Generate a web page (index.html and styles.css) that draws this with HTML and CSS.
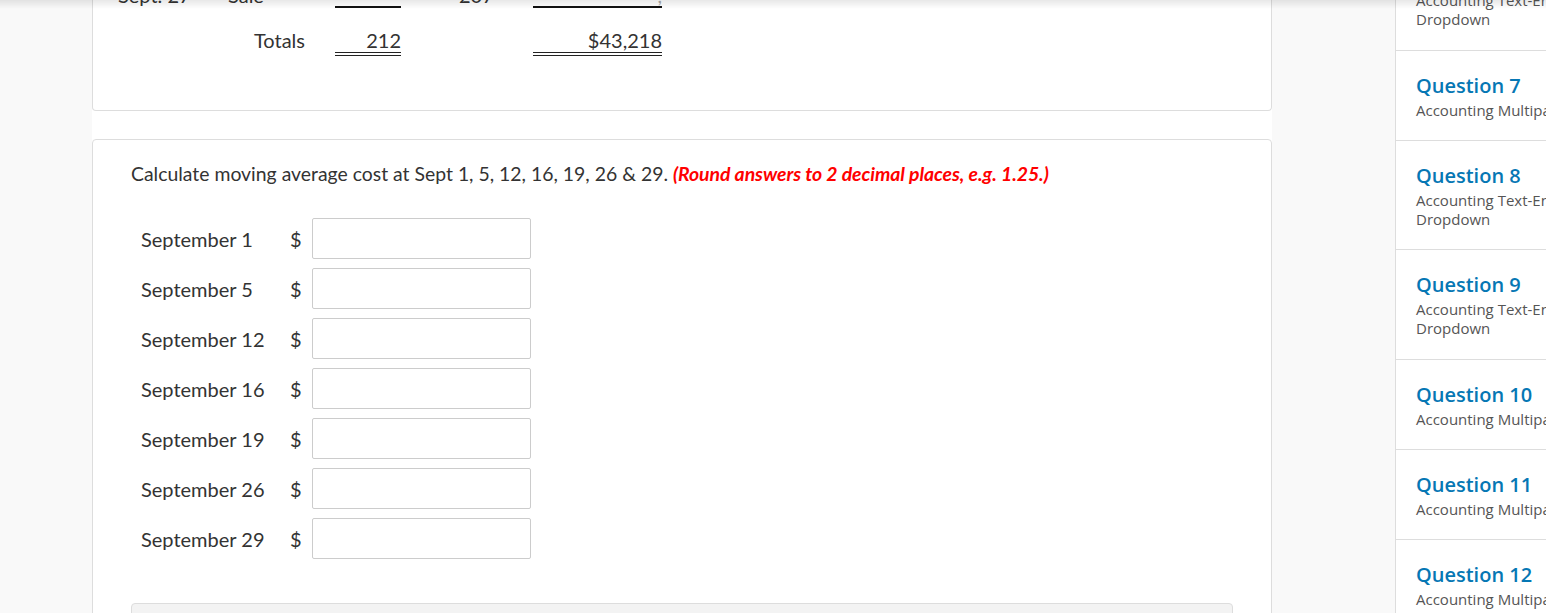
FILE: index.html
```html
<!DOCTYPE html>
<html lang="en">
<head>
<meta charset="utf-8">
<title>Quiz</title>
<link rel="stylesheet" href="styles.css">
</head>
<body>
<div class="topshade"></div>
<div class="page">
  <main class="main">
    <section class="card card-top">
      <div class="ledger">
        <div class="row row-partial">
          <div class="c1">Sept. 27</div>
          <div class="c2 left">Sale</div>
          <div class="c3 single"><span class="faint">&nbsp;</span></div>
          <div class="c4">207</div>
          <div class="c5 single"><span class="faint">,</span></div>
        </div>
        <div class="row row-total">
          <div class="c1"></div>
          <div class="c2">Totals</div>
          <div class="c3 double">212</div>
          <div class="c4"></div>
          <div class="c5 double">$43,218</div>
        </div>
      </div>
    </section>

    <section class="card card-q">
      <p class="prompt">Calculate moving average cost at Sept 1, 5, 12, 16, 19, 26 &amp; 29. <em class="hint">(Round answers to 2 decimal places, e.g. 1.25.)</em></p>
      <div class="answers">
        <div class="arow"><span class="alabel">September 1</span><span class="dollar">$</span><input class="ainput" type="text"></div>
        <div class="arow"><span class="alabel">September 5</span><span class="dollar">$</span><input class="ainput" type="text"></div>
        <div class="arow"><span class="alabel">September 12</span><span class="dollar">$</span><input class="ainput" type="text"></div>
        <div class="arow"><span class="alabel">September 16</span><span class="dollar">$</span><input class="ainput" type="text"></div>
        <div class="arow"><span class="alabel">September 19</span><span class="dollar">$</span><input class="ainput" type="text"></div>
        <div class="arow"><span class="alabel">September 26</span><span class="dollar">$</span><input class="ainput" type="text"></div>
        <div class="arow"><span class="alabel">September 29</span><span class="dollar">$</span><input class="ainput" type="text"></div>
      </div>
      <div class="footerbox"></div>
    </section>
  </main>

  <aside class="sidebar">
    <div class="qitem qitem-first">
      <div class="qsub">Accounting Text-Entry Dropdown</div>
    </div>
    <div class="qitem">
      <div class="qtitle">Question 7</div>
      <div class="qsub">Accounting Multipart</div>
    </div>
    <div class="qitem">
      <div class="qtitle">Question 8</div>
      <div class="qsub">Accounting Text-Entry Dropdown</div>
    </div>
    <div class="qitem qitem-tall">
      <div class="qtitle">Question 9</div>
      <div class="qsub">Accounting Text-Entry Dropdown</div>
    </div>
    <div class="qitem">
      <div class="qtitle">Question 10</div>
      <div class="qsub">Accounting Multipart</div>
    </div>
    <div class="qitem">
      <div class="qtitle">Question 11</div>
      <div class="qsub">Accounting Multipart</div>
    </div>
    <div class="qitem">
      <div class="qtitle">Question 12</div>
      <div class="qsub">Accounting Multipart</div>
    </div>
  </aside>
</div>
</body>
</html>
```

FILE: styles.css
```css
html, body {
  margin: 0;
  padding: 0;
  height: 100%;
  overflow: hidden;
  background: #f9f9f9;
}

body {
  font-family: Lato, "Liberation Sans", sans-serif;
  color: #333;
}

.topshade {
  position: fixed;
  top: 0;
  left: 0;
  right: 0;
  height: 9px;
  background: linear-gradient(to bottom, rgba(0,0,0,0.09), rgba(0,0,0,0));
  pointer-events: none;
  z-index: 5;
}

.page {
  display: flex;
  align-items: flex-start;
  padding-left: 92px;
}

.main {
  width: 1180px;
  background: #fff;
  display: flex;
  flex-direction: column;
  gap: 28px;
  min-height: 700px;
}

.card {
  border: 1px solid #ddd;
  border-radius: 4px;
  background: #fff;
  box-sizing: border-box;
  width: 1180px;
}

.card-top {
  border-top: none;
  border-radius: 0 0 4px 4px;
  padding: 0 0 54px 25px;
}

.ledger {
  display: flex;
  flex-direction: column;
  font-size: 20px;
}

.row {
  display: grid;
  grid-template-columns: 110px 87px 86px 132px 129px;
}

.row > div {
  white-space: nowrap;
}

.row-partial {
  margin-top: -16px;
  line-height: 22px;
}

.row-total {
  margin-top: 21px;
  line-height: 23px;
}

.c2 { text-align: right; padding-right: 10px; }
.c2.left { text-align: left; padding-right: 0; }
.c3 { margin-left: 20px; text-align: right; }
.c4 { text-align: left; padding-left: 58px; }
.c5 { text-align: right; }

.row-partial .c3, .row-partial .c5 { color: #aaa; }

.single { border-bottom: 2px solid #111; }
.double { border-bottom: 4px double #222; }

.card-q {
  padding: 22px 38px 0 38px;
}

.prompt {
  margin: 0;
  font-size: 19.4px;
  line-height: 24px;
}

.hint {
  color: #f00;
  font-weight: bold;
  font-style: italic;
  letter-spacing: -0.05px;
}

.answers {
  display: flex;
  flex-direction: column;
  gap: 9px;
  margin-top: 32px;
  padding-left: 10px;
}

.arow {
  display: flex;
  align-items: center;
  height: 41px;
}

.alabel {
  width: 149px;
  font-size: 20px;
}

.dollar {
  width: 22px;
  font-size: 20px;
}

.ainput {
  width: 219px;
  height: 41px;
  box-sizing: border-box;
  border: 1px solid #ccc;
  border-radius: 2px;
  background: #fff;
  margin: 0;
  padding: 4px 8px;
  font: inherit;
}

.footerbox {
  margin-top: 44px;
  height: 40px;
  background: #f3f3f3;
  border: 1px solid #ddd;
  border-radius: 4px 4px 0 0;
}

.sidebar {
  margin-left: 123px;
  width: 230px;
  flex-shrink: 0;
  background: #fff;
  border-left: 1px solid #ddd;
  min-height: 700px;
  font-family: "Open Sans", "Liberation Sans", sans-serif;
}

.qitem {
  padding: 21px 20px 20px 20px;
  border-bottom: 1px solid #ddd;
}

.qitem-first {
  padding-top: 0;
  padding-bottom: 21px;
  margin-top: -9px;
}

.qitem-tall {
  padding-bottom: 21px;
}

.qtitle {
  color: #0677b4;
  font-size: 20px;
  line-height: 27px;
  font-weight: 600;
}

.qtitle + .qsub {
  margin-top: 2px;
}

.qsub {
  color: #555;
  font-size: 15px;
  line-height: 19px;
  width: 185px;
}
```
